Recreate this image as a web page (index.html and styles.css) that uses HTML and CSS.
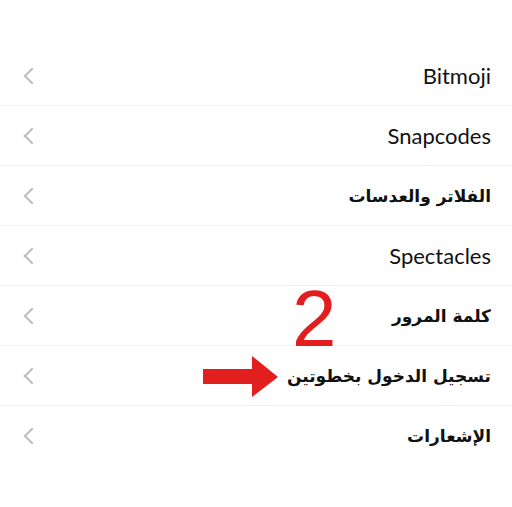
FILE: index.html
```html
<!DOCTYPE html>
<html lang="ar">
  <head>
    <meta charset="UTF-8" />
    <title>Settings</title>
    <link rel="stylesheet" href="styles.css">
  </head>
  <body>
    <div class="screen">
      <ul class="settings-list">
        <li class="row"><span class="chevron"></span><span class="label latin">Bitmoji</span></li>
        <li class="row"><span class="chevron"></span><span class="label latin">Snapcodes</span></li>
        <li class="row"><span class="chevron"></span><span class="label arabic">الفلاتر والعدسات</span></li>
        <li class="row"><span class="chevron"></span><span class="label latin">Spectacles</span></li>
        <li class="row"><span class="chevron"></span><span class="label arabic">كلمة المرور</span></li>
        <li class="row"><span class="chevron"></span><span class="label arabic">تسجيل الدخول بخطوتين</span></li>
        <li class="row"><span class="chevron"></span><span class="label arabic">الإشعارات</span></li>
      </ul>

      <!-- annotation over the list -->
      <div class="step-number">2</div>
      <svg class="step-arrow" width="76" height="42" viewBox="0 0 76 42">
        <polygon points="0,13 49,13 49,0 75,21 49,41 49,28 0,28" fill="#e21f1f" />
      </svg>
    </div>
  </body>
</html>
```

FILE: styles.css
```css
* {
  box-sizing: border-box;
  margin: 0;
  padding: 0;
}

body {
  background: #fff;
  color: #111;
}

.screen {
  position: relative;
  width: 512px;
  height: 507px;
  padding-top: 46px;
}

.settings-list {
  list-style: none;
}

.row {
  display: flex;
  align-items: center;
  justify-content: space-between;
  height: 60px;
  padding: 0 21px 0 24px;
  border-bottom: 1px solid #f1f1f1;
}

.row:last-child {
  border-bottom: none;
}

.chevron {
  width: 12px;
  height: 12px;
  border-left: 2px solid #bdbdbd;
  border-bottom: 2px solid #bdbdbd;
  transform: rotate(45deg);
  margin-left: 2px;
}

.label {
  font-size: 22px;
}

.latin {
  font-family: 'Lato', 'Noto Sans', sans-serif;
}

.arabic {
  font-family: 'DejaVu Sans', sans-serif;
  font-weight: bold;
  font-size: 17px;
  direction: rtl;
}

.step-number {
  position: absolute;
  left: 292px;
  top: 279px;
  font-family: 'Liberation Sans', Arial, sans-serif;
  font-size: 80px;
  line-height: 1;
  color: #e21f1f;
}

.step-arrow {
  position: absolute;
  left: 203px;
  top: 356px;
}
```
